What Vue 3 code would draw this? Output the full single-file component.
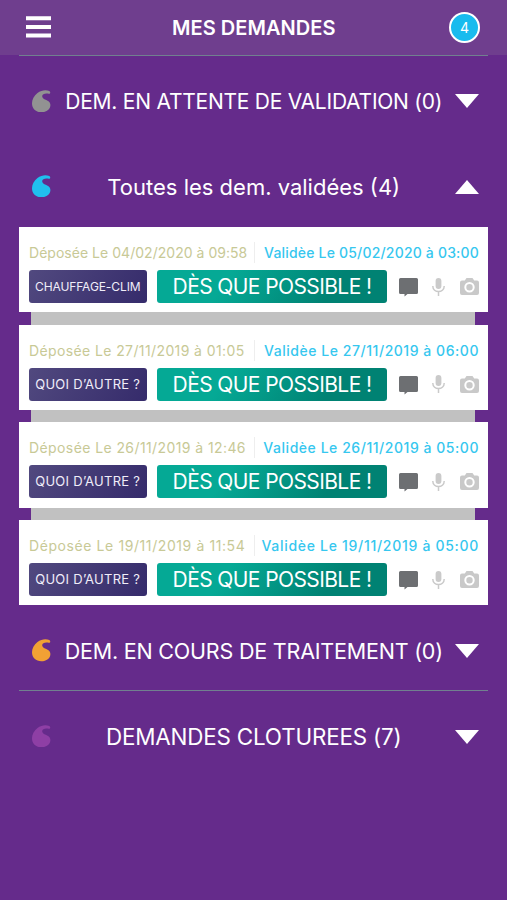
<script setup>
const cards = [
  { filed: '04/02/2020 à 09:58', approved: '05/02/2020 à 03:00', kind: 'CHAUFFAGE-CLIM', small: true, fs: '0.03px', as: '0.19px' },
  { filed: '27/11/2019 à 01:05', approved: '27/11/2019 à 06:00', kind: 'QUOI D’AUTRE ?', fs: '0.39px', as: '0.54px' },
  { filed: '26/11/2019 à 12:46', approved: '26/11/2019 à 05:00', kind: 'QUOI D’AUTRE ?', fs: '0.41px', as: '0.54px' },
  { filed: '19/11/2019 à 11:54', approved: '19/11/2019 à 05:00', kind: 'QUOI D’AUTRE ?', fs: '0.59px', as: '0.7px' },
]
const before = [
  { title: 'DEM. EN ATTENTE DE VALIDATION (0)', color: '#929292', name: 'waiting' },
  { title: 'Toutes les dem. validées (4)', color: '#20bfee', name: 'validated', open: true },
]
const after = [
  { title: 'DEM. EN COURS DE TRAITEMENT (0)', color: '#f2a134', name: 'progress' },
  { title: 'DEMANDES CLOTUREES (7)', color: '#8e3fa5', name: 'closed' },
]
const drop = 'M17.300 1C14.500 -.3 9.500 -.3 5.500 3 2 5.800 0 9.300 0 13.300 0 18.800 4 22.300 9.300 22.300c5.200 0 9.100-3 9.100-7.300 0-2-1-3.500-2.800-4.300C13.500 9.700 10.200 8.600 10.200 6.300 10.200 3.800 13.500 3 16.800 3.800 18.400 4.200 18.800 1.700 17.300 1Z'
</script>

<template>
  <main class="screen">
    <header class="bar">
      <svg class="menu" viewBox="0 0 25 22"><path d="M0 2.200h25M0 10.900h25M0 19.500h25" stroke="#fff" stroke-width="4" /></svg>
      <h1>MES DEMANDES</h1>
      <span class="badge">4</span>
    </header>
    <div class="line"></div>
    <section v-for="s in before" :key="s.name" class="group" :class="s.name">
      <svg class="drop" viewBox="0 0 18.500 22.500"><path :d="drop" :fill="s.color" /></svg>
      <h2><span>{{ s.title }}</span></h2>
      <svg class="arrow" viewBox="0 0 24 14"><path :d="s.open ? 'M12 0 24 14H0Z' : 'M0 0H24L12 14Z'" fill="#fff" /></svg>
    </section>
    <div class="cards">
      <article v-for="c in cards" :key="c.filed" class="card">
        <div class="dates">
          <span class="filed" :style="{ letterSpacing: c.fs }">Déposée Le {{ c.filed }}</span>
          <i class="sep"></i>
          <span class="approved" :style="{ letterSpacing: c.as }">Validèe Le {{ c.approved }}</span>
        </div>
        <div class="actions">
          <span class="chip" :class="{ small: c.small }">{{ c.kind }}</span>
          <span class="when">DÈS QUE POSSIBLE !</span>
          <svg class="chat" viewBox="0 0 19 19"><path d="M1.500 0h16q1.500 0 1.500 1.500v13q0 1.500-1.500 1.500H8.500L5.500 18.500V16H1.500q-1.500 0-1.500-1.500V1.500Q0 0 1.500 0Z" fill="#6d6f72" /></svg>
          <svg class="mic" viewBox="0 0 13 18"><rect x="3.600" y="0" width="5.800" height="11" rx="2.900" fill="#cacaca" /><path d="M.8 8C.8 15.400 12.200 15.400 12.200 8M6.500 13.500V18" fill="none" stroke="#cacaca" stroke-width="1.500" /></svg>
          <svg class="camera" viewBox="0 0 19 17"><path d="M2 2.500H4.800L6.500 0h6l1.700 2.500H17q2 0 2 2V15q0 2-2 2H2q-2 0-2-2V4.500q0-2 2-2Z" fill="#c9c9c9" /><circle cx="9.500" cy="9.300" r="4.200" fill="#c9c9c9" stroke="#fff" stroke-width="2" /></svg>
        </div>
      </article>
    </div>
    <template v-for="(s, i) in after" :key="s.name">
      <div v-if="i" class="line"></div>
      <section class="group" :class="s.name">
        <svg class="drop" viewBox="0 0 18.500 22.500"><path :d="drop" :fill="s.color" /></svg>
        <h2><span>{{ s.title }}</span></h2>
        <svg class="arrow" viewBox="0 0 24 14"><path d="M0 0H24L12 14Z" fill="#fff" /></svg>
      </section>
    </template>
  </main>
</template>

<style>
body { background: #652b8b; }
</style>

<style scoped>
.screen { width: 507px; height: 900px; background: #652b8b; color: #fff; font-family: Inter, sans-serif; overflow: hidden; }
.bar { box-sizing: border-box; height: 54.500px; padding: 0 27px 0 25.500px; background: #6f3e8e; display: flex; align-items: center; justify-content: space-between; }
.menu { width: 25px; height: 22px; }
h1 { margin: 0; font-size: 20px; line-height: 24px; font-weight: 600; letter-spacing: 0.050px; padding: 1px 0 0 8px; }
.badge { box-sizing: border-box; width: 31px; height: 31px; border: 2.500px solid #fff; border-radius: 50%; background: #18bbee; font-size: 14px; line-height: 27px; text-align: center; }
.line { height: 1px; margin: 0 19px; background: #71808f; }
.group { box-sizing: border-box; padding: 0 28px 0 32px; display: flex; align-items: center; }
.waiting { height: 91px; }
.validated { height: 80.500px; }
.progress { height: 85px; padding-top: 7px; }
.closed { height: 91px; }
.drop { width: 18.500px; height: 22.500px; flex: none; margin-bottom: 2px; }
.waiting .drop { margin-bottom: 0; }
.arrow { width: 24px; height: 14px; flex: none; }
h2 { flex: 1; margin: 0; padding-left: 2px; display: flex; justify-content: center; font-size: 22px; line-height: 28px; font-weight: 400; white-space: nowrap; }
.waiting h2 { font-size: 21px; letter-spacing: -0.240px; padding-top: 2px; }
.progress h2 { font-size: 21.500px; letter-spacing: -0.200px; }
.closed h2 { font-size: 22.400px; letter-spacing: -0.170px; }
.cards { margin: 0 19px; display: grid; grid-template-columns: minmax(0, 1fr); gap: 12.300px; background: linear-gradient(90deg, #652b8b 12.500px, #c1c1c1 12.500px calc(100% - 12.500px), #652b8b calc(100% - 12.500px)); }
.card { box-sizing: border-box; height: 85.400px; padding: 16px 9px 0 10px; background: #fff; }
.dates { display: flex; justify-content: space-between; height: 20px; line-height: 20px; font-size: 14px; white-space: nowrap; }
.filed { width: 225px; color: #c8c996; }
.approved { flex: 1; text-align: right; font-weight: 500; color: #36c7ef; }
.sep { width: 1px; height: 21px; margin-top: -1px; background: #eee; }
.actions { display: flex; align-items: center; margin-top: 7px; height: 33px; }
.chip { width: 117.500px; height: 33px; border-radius: 3px; background: linear-gradient(120deg, #51497f, #352b6b); color: #f0edf9; font-size: 13px; letter-spacing: 0.300px; line-height: 33px; text-align: center; white-space: nowrap; }
.small { font-size: 12px; letter-spacing: -0.100px; }
.when { width: 230px; height: 33px; margin-left: 10.500px; border-radius: 3px; background: linear-gradient(125deg, #05a995 30%, #008273 75%); font-size: 21px; letter-spacing: -0.600px; line-height: 33px; text-align: center; white-space: nowrap; }
.chat { width: 19px; height: 19px; margin-left: 12px; margin-top: 2px; }
.mic { width: 13px; height: 18px; margin-left: 14px; }
.camera { width: 19px; height: 17px; margin-left: 14.500px; }
</style>
